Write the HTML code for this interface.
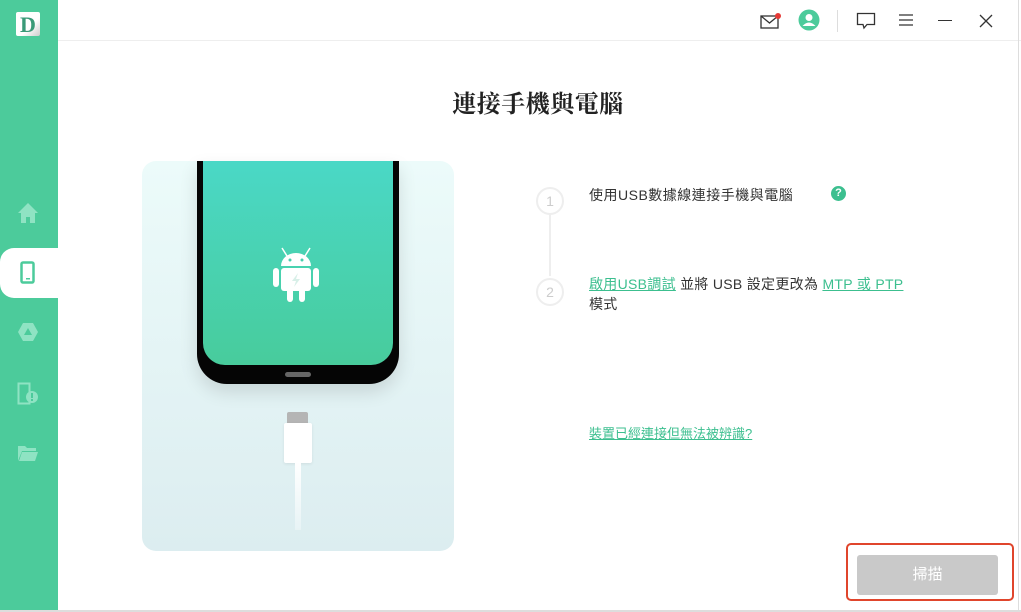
<!DOCTYPE html>
<html><head><meta charset="utf-8"><style>
*{margin:0;padding:0;box-sizing:border-box}
body{width:1021px;height:612px;overflow:hidden;background:#fff;position:relative;font-family:"Liberation Sans","Noto Sans CJK TC",sans-serif;color:#333}
.abs{position:absolute}
.side{left:0;top:0;width:58px;height:610px;background:#4ccb9b}
.tab{left:0;top:248px;width:58px;height:50px;background:#fff;border-radius:14px 0 0 14px}
a{color:#3cbf8f;text-decoration:underline}
</style></head><body>
<div class="abs side"></div>
<div class="abs" style="left:16px;top:12px;width:24px;height:24px;background:linear-gradient(135deg,#fff 60%,#ccc);border-radius:2px;font-family:'Liberation Serif',serif;font-size:22px;line-height:25px;text-align:center;color:#3a9a78;font-weight:bold">D</div>
<div class="abs tab"></div>
<svg class="abs" style="left:17px;top:202px" width="22" height="22" viewBox="0 0 22 22"><path d="M11 1 L21 11 H18 V21 H13 V15 H9 V21 H4 V11 H1 Z" fill="#8fe3c3"/></svg>
<svg class="abs" style="left:20px;top:261px" width="16" height="24" viewBox="0 0 16 24"><rect x="1.5" y="1.5" width="12" height="20" rx="1.5" fill="none" stroke="#4ccb9b" stroke-width="2.5"/><rect x="6" y="17" width="4" height="1.5" fill="#4ccb9b"/></svg>
<svg class="abs" style="left:17px;top:322px" width="22" height="20" viewBox="0 0 22 20"><path d="M6 1 H16 L21 10 L16 19 H6 L1 10 Z" fill="#8fe3c3"/><path d="M11 6 L15 13 H7 Z" fill="#4ccb9b"/></svg>
<svg class="abs" style="left:17px;top:382px" width="22" height="24" viewBox="0 0 22 24"><rect x="1.5" y="1.5" width="11" height="20" fill="none" stroke="#8fe3c3" stroke-width="2"/><circle cx="15" cy="15" r="6" fill="#8fe3c3"/><rect x="14" y="11" width="2" height="5" fill="#4ccb9b"/><rect x="14" y="17" width="2" height="2" fill="#4ccb9b"/></svg>
<svg class="abs" style="left:17px;top:444px" width="22" height="18" viewBox="0 0 22 18"><path d="M1 2 H8 L10 4 H19 V7 H5 L1 17 Z" fill="#8fe3c3"/><path d="M5 8 H21 L18 17 H2 Z" fill="#8fe3c3"/></svg>
<div class="abs" style="left:58px;top:40px;width:963px;height:1px;background:#eee"></div>
<div class="abs" style="left:1018px;top:0;width:1px;height:612px;background:#ddd"></div>
<svg class="abs" style="left:760px;top:12px" width="22" height="18" viewBox="0 0 22 18"><rect x="1" y="4" width="17" height="12" fill="none" stroke="#333" stroke-width="1.3"/><path d="M1 4 L9.5 11 L18 4" fill="none" stroke="#333" stroke-width="1.3"/><circle cx="18" cy="4" r="3" fill="#e53935"/></svg>
<svg class="abs" style="left:798px;top:9px" width="22" height="22" viewBox="0 0 22 22"><circle cx="11" cy="11" r="10.5" fill="#4ccb9b"/><circle cx="11" cy="8.5" r="3.5" fill="#fff"/><path d="M4.5 17 Q11 10 17.5 17 Z" fill="#fff"/></svg>
<div class="abs" style="left:837px;top:10px;width:1px;height:22px;background:#ddd"></div>
<svg class="abs" style="left:856px;top:12px" width="20" height="18" viewBox="0 0 20 18"><path d="M1.5 1.5 H18.5 V12.5 H11 L8 16 L7 12.5 H1.5 Z" fill="none" stroke="#333" stroke-width="1.3"/></svg>
<svg class="abs" style="left:898px;top:13px" width="16" height="14" viewBox="0 0 16 14"><path d="M1 2H15M1 7H15M1 12H15" stroke="#333" stroke-width="1.3"/></svg>
<div class="abs" style="left:938px;top:20px;width:14px;height:1.3px;background:#333"></div>
<svg class="abs" style="left:978px;top:13px" width="16" height="16" viewBox="0 0 16 16"><path d="M2 2L14 14M14 2L2 14" stroke="#333" stroke-width="1.3"/></svg>
<div class="abs" style="left:436px;top:84px;width:204px;text-align:center;font-family:'Liberation Serif','Noto Serif CJK SC',serif;font-size:24px;font-weight:bold;color:#222;letter-spacing:0.5px">連接手機與電腦</div>
<div class="abs" style="left:142px;top:161px;width:312px;height:390px;border-radius:14px;background:linear-gradient(180deg,#ecfbfa,#dcedf0)"></div>
<div class="abs" style="left:197px;top:161px;width:202px;height:223px;background:#050505;border-radius:0 0 30px 30px;box-shadow:0 8px 18px rgba(0,0,0,.12)"></div>
<div class="abs" style="left:203px;top:161px;width:190px;height:204px;border-radius:0 0 22px 22px;background:linear-gradient(180deg,#4ad8c6,#48cc9c)"></div>
<div class="abs" style="left:285px;top:372px;width:26px;height:5px;border-radius:3px;background:#666"></div>
<svg class="abs" style="left:272px;top:245px" width="52" height="60" viewBox="0 0 52 60"><path d="M10 3 L15 11 M38 3 L33 11" stroke="#fff" stroke-width="1.5"/><path d="M9 21 A15 13 0 0 1 39 21 Z" fill="#fff"/><circle cx="18" cy="15" r="1.5" fill="#48cfae"/><circle cx="30" cy="15" r="1.5" fill="#48cfae"/><rect x="9" y="23" width="30" height="23" rx="3" fill="#fff"/><rect x="1" y="23" width="6" height="19" rx="3" fill="#fff"/><rect x="41" y="23" width="6" height="19" rx="3" fill="#fff"/><rect x="15" y="42" width="6" height="15" rx="3" fill="#fff"/><rect x="27" y="42" width="6" height="15" rx="3" fill="#fff"/><path d="M26 28 L20 36 H24 L22 42 L28 34 H24 Z" fill="#d8efe8"/></svg>
<div class="abs" style="left:287px;top:412px;width:21px;height:12px;background:#b5b5b5;border-radius:2px 2px 0 0"></div>
<div class="abs" style="left:284px;top:423px;width:28px;height:40px;background:#fff;border-radius:2px;box-shadow:0 1px 3px rgba(0,0,0,.08)"></div>
<div class="abs" style="left:295px;top:462px;width:6px;height:68px;background:linear-gradient(#fff,rgba(255,255,255,.3))"></div>
<div class="abs" style="left:549px;top:214px;width:2px;height:62px;background:#eee"></div>
<div class="abs" style="left:536px;top:187px;width:28px;height:28px;border:2px solid #eee;border-radius:50%;text-align:center;line-height:24px;font-size:14px;color:#ccc;background:#fff">1</div>
<div class="abs" style="left:536px;top:278px;width:28px;height:28px;border:2px solid #eee;border-radius:50%;text-align:center;line-height:24px;font-size:14px;color:#ccc;background:#fff">2</div>
<div class="abs" style="left:589px;top:185px;font-size:14px;color:#333;letter-spacing:0.5px">使用USB數據線連接手機與電腦</div>
<div class="abs" style="left:831px;top:186px;width:15px;height:15px;border-radius:50%;background:#3cbf8f;color:#fff;font-size:11px;font-weight:bold;text-align:center;line-height:15px">?</div>
<div class="abs" style="left:589px;top:274px;width:340px;font-size:14px;line-height:20px;color:#333;letter-spacing:0.3px"><a>啟用USB調試</a> 並將 USB 設定更改為 <a>MTP 或 PTP</a><br>模式</div>
<div class="abs" style="left:589px;top:423px;font-size:13px"><a>裝置已經連接但無法被辨識?</a></div>
<div class="abs" style="left:846px;top:543px;width:168px;height:58px;border:2.5px solid #e0452c;border-radius:5px"></div>
<div class="abs" style="left:857px;top:555px;width:141px;height:40px;background:#c9c9c9;border-radius:3px;color:#fff;text-align:center;line-height:40px;font-size:15px">掃描</div>
<div class="abs" style="left:0;top:610px;width:1021px;height:2px;background:#ddd"></div>
</body></html>
